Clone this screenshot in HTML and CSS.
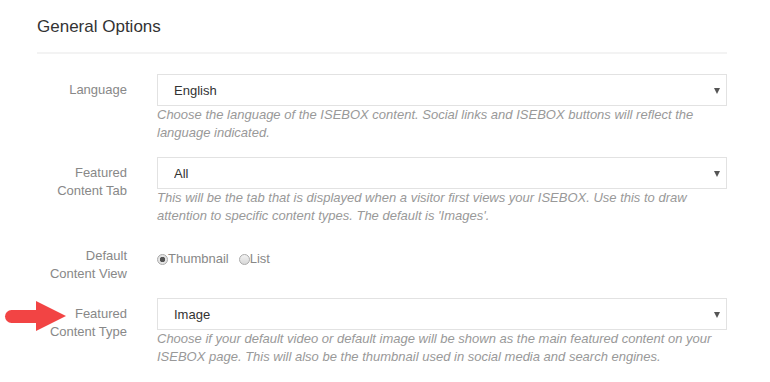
FILE: index.html
```html
<!DOCTYPE html>
<html lang="en">
<head>
    <meta charset="UTF-8">
    <meta name="viewport" content="width=device-width, initial-scale=1.0">
    <title>General Options</title>
    <link rel="stylesheet" href="styles.css">
</head>
<body>

    <div class="panel">
        <h3 class="panel-title">General Options</h3>

        <!-- Language -->
        <div class="form-row">
            <label class="row-label" for="language">Language</label>
            <div class="row-field">
                <span class="select-wrap">
                    <select id="language" class="select">
                        <option>English</option>
                    </select>
                </span>
                <p class="help">Choose the language of the ISEBOX content. Social links and ISEBOX buttons will reflect the language indicated.</p>
            </div>
        </div>

        <!-- Featured content tab -->
        <div class="form-row">
            <label class="row-label" for="featured-tab">Featured<br>Content Tab</label>
            <div class="row-field">
                <span class="select-wrap">
                    <select id="featured-tab" class="select">
                        <option>All</option>
                    </select>
                </span>
                <p class="help">This will be the tab that is displayed when a visitor first views your ISEBOX. Use this to draw attention to specific content types. The default is 'Images'.</p>
            </div>
        </div>

        <!-- Default view -->
        <div class="form-row">
            <label class="row-label">Default<br>Content View</label>
            <div class="row-field radios">
                <label class="radio"><input type="radio" name="view" checked>Thumbnail</label>
                <label class="radio"><input type="radio" name="view">List</label>
            </div>
        </div>

        <!-- Featured content type -->
        <div class="form-row marked">
            <span class="pointer"></span>
            <label class="row-label" for="featured-type">Featured<br>Content Type</label>
            <div class="row-field">
                <span class="select-wrap">
                    <select id="featured-type" class="select">
                        <option>Image</option>
                    </select>
                </span>
                <p class="help">Choose if your default video or default image will be shown as the main featured content on your ISEBOX page. This will also be the thumbnail used in social media and search engines.</p>
            </div>
        </div>
    </div>

</body>
</html>
```

FILE: styles.css
```css
body {
    margin: 0;
    font-family: "Liberation Sans", Arial, sans-serif;
    background-color: #fff;
    color: #333;
}
.panel {
    width: 690px;
    margin-left: 37px;
    padding-top: 17px;
}
.panel-title {
    margin: 0 0 20px;
    padding-bottom: 15px;
    border-bottom: 2px solid #f3f3f3;
    font-size: 17px;
    font-weight: normal;
    line-height: 20px;
    color: #333;
}
.form-row {
    display: grid;
    grid-template-columns: 90px 570px;
    column-gap: 30px;
    margin-bottom: 15px;
}
.marked {
    position: relative;
}
.row-label {
    padding-top: 7px;
    text-align: right;
    font-size: 13px;
    line-height: 18px;
    color: #888;
}
.select-wrap {
    position: relative;
    display: block;
}
.select-wrap::after {
    content: "";
    position: absolute;
    right: 7px;
    top: 14px;
    border-left: 3.5px solid transparent;
    border-right: 3.5px solid transparent;
    border-top: 6px solid #555;
}
.select {
    display: block;
    width: 100%;
    height: 32px;
    padding: 0 0 0 16px;
    border: 1px solid #e2e2e2;
    background-color: #fff;
    font-family: inherit;
    font-size: 13px;
    color: #333;
    -webkit-appearance: none;
    appearance: none;
    border-radius: 0;
}
.help {
    margin: 0;
    font-size: 13px;
    font-style: italic;
    line-height: 18px;
    color: #999;
}
.radios {
    display: flex;
    align-items: flex-start;
    gap: 10px;
    padding-top: 10px;
    font-size: 13px;
    line-height: 18px;
    color: #888;
}
.radio {
    display: flex;
    align-items: center;
}
.radio input {
    -webkit-appearance: none;
    appearance: none;
    width: 11px;
    height: 11px;
    margin: 0;
    border: 1px solid #aaa;
    border-radius: 50%;
    background: linear-gradient(#f2f2f2, #d8d8d8);
}
.radio input:checked {
    background: radial-gradient(circle, #555 0, #555 2.5px, #e4e4e4 3px);
}
.pointer {
    position: absolute;
    left: -32px;
    top: 3px;
    width: 30px;
    height: 30px;
}
.pointer::before {
    content: "";
    position: absolute;
    left: 0;
    top: 9px;
    width: 34px;
    height: 13px;
    border-radius: 7px 0 0 7px;
    background-color: #f24444;
}
.pointer::after {
    content: "";
    position: absolute;
    left: 31px;
    top: 0;
    border-top: 15px solid transparent;
    border-bottom: 15px solid transparent;
    border-left: 30px solid #f24444;
}
```
